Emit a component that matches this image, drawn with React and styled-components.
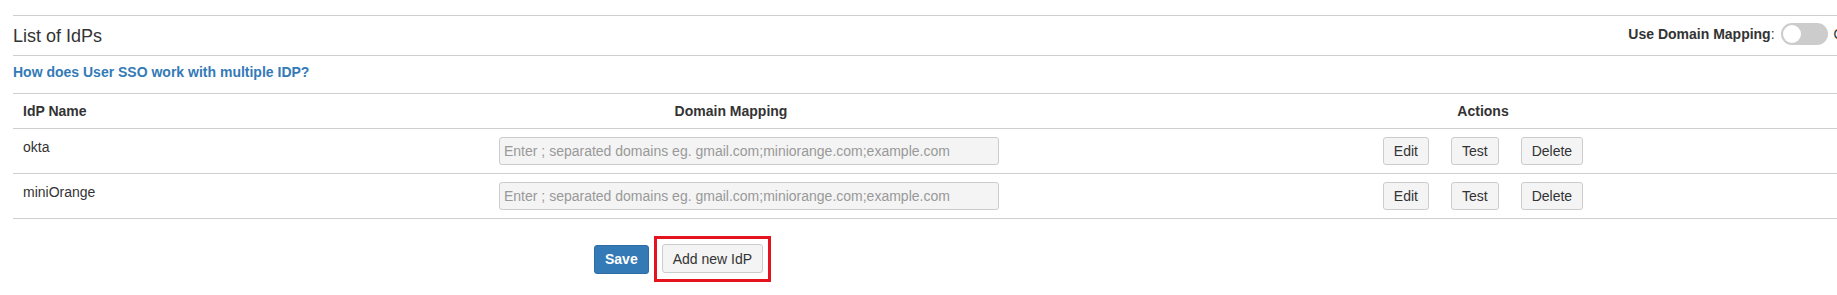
import React from 'react';
import styled, { createGlobalStyle } from 'styled-components';

const GlobalStyle = createGlobalStyle`
  html, body {
    margin: 0;
    overflow: hidden;
    background: #fff;
  }
  body {
    font-family: "Liberation Sans", Arial, sans-serif;
    font-size: 14px;
    line-height: 20px;
    color: #333;
  }
`;

const Page = styled.div`
  width: 1921px;
  padding: 15px 0 0 13px;
`;

const TitleBar = styled.div`
  display: flex;
  align-items: center;
  justify-content: space-between;
  height: 39px;
  padding-right: 82px;
  border-top: 1px solid #cfcfcf;
  border-bottom: 1px solid #cfcfcf;
`;

const Title = styled.h3`
  margin: 0;
  font-size: 18px;
  font-weight: normal;
  color: #333;
`;

const ToggleGroup = styled.div`
  display: flex;
  align-items: center;
  gap: 6px;
  margin-bottom: 3px;
`;

const ToggleLabel = styled.span`
  font-weight: bold;
  span {
    font-weight: normal;
  }
`;

const Switch = styled.span`
  position: relative;
  display: inline-block;
  width: 47px;
  height: 22px;
  border-radius: 11px;
  background: #ccc;

  &::after {
    content: '';
    position: absolute;
    top: 2px;
    left: 2px;
    width: 18px;
    height: 18px;
    border-radius: 50%;
    background: #fff;
  }
`;

const LinkRow = styled.div`
  padding: 6px 0 11px;
  border-bottom: 1px solid #cfcfcf;
`;

const HelpLink = styled.a`
  color: #337ab7;
  font-weight: bold;
  text-decoration: none;
`;

const Row = styled.div`
  display: grid;
  grid-template-columns: 417px 602px 1fr;
  border-bottom: 1px solid #cfcfcf;
`;

const HeadCell = styled.div`
  padding: 7px 10px;
  font-weight: bold;
  text-align: ${(p) => p.$align || 'left'};
`;

const Cell = styled.div`
  padding: 8px 10px 8px ${(p) => p.$indent || 10}px;
  min-height: 28px;
`;

const DomainInput = styled.input`
  box-sizing: border-box;
  display: block;
  width: 500px;
  height: 28px;
  padding: 0 4px;
  border: 1px solid #ccc;
  border-radius: 3px;
  background: #f4f4f4;
  font-family: inherit;
  font-size: 14px;
  color: #333;

  &::placeholder {
    color: #999;
  }
`;

const Actions = styled.div`
  display: flex;
  justify-content: center;
  gap: 22px;
`;

const Button = styled.button`
  box-sizing: border-box;
  height: ${(p) => p.$h || 28}px;
  padding: 0 10px;
  border: 1px solid ${(p) => (p.$primary ? '#2e6da4' : '#ccc')};
  border-radius: 3px;
  background: ${(p) => (p.$primary ? '#337ab7' : '#f4f4f4')};
  color: ${(p) => (p.$primary ? '#fff' : '#333')};
  font-family: inherit;
  font-size: 14px;
  font-weight: ${(p) => (p.$primary ? 'bold' : 'normal')};
`;

const Footer = styled.div`
  display: flex;
  align-items: center;
  gap: 5px;
  padding: 17px 0 0 581px;
`;

const Highlight = styled.div`
  display: flex;
  padding: 5px 5px 6px;
  border: 3px solid #e5131d;
`;

const idps = ['okta', 'miniOrange'];

export default function App() {
  return (
    <>
      <GlobalStyle />
      <Page>
        <TitleBar>
          <Title>List of IdPs</Title>
          <ToggleGroup>
            <ToggleLabel>
              Use Domain Mapping<span>:</span>
            </ToggleLabel>
            <Switch />
            <span>Off</span>
          </ToggleGroup>
        </TitleBar>

        <LinkRow>
          <HelpLink href="#">How does User SSO work with multiple IDP?</HelpLink>
        </LinkRow>

        <Row>
          <HeadCell>IdP Name</HeadCell>
          <HeadCell $align="center">Domain Mapping</HeadCell>
          <HeadCell $align="center">Actions</HeadCell>
        </Row>

        {idps.map((name) => (
          <Row key={name}>
            <Cell>{name}</Cell>
            <Cell $indent={69}>
              <DomainInput placeholder="Enter ; separated domains eg. gmail.com;miniorange.com;example.com" />
            </Cell>
            <Cell>
              <Actions>
                <Button>Edit</Button>
                <Button>Test</Button>
                <Button>Delete</Button>
              </Actions>
            </Cell>
          </Row>
        ))}

        <Footer>
          <Button $primary $h={29}>Save</Button>
          <Highlight>
            <Button $h={29}>Add new IdP</Button>
          </Highlight>
        </Footer>
      </Page>
    </>
  );
}
